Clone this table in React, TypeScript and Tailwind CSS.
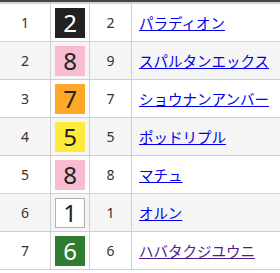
const rows = [
  { order: 1, frame: 2, horse: 2, name: "パラディオン", visited: false },
  { order: 2, frame: 8, horse: 9, name: "スパルタンエックス", visited: false },
  { order: 3, frame: 7, horse: 7, name: "ショウナンアンバー", visited: false },
  { order: 4, frame: 5, horse: 5, name: "ポッドリプル", visited: false },
  { order: 5, frame: 8, horse: 8, name: "マチュ", visited: false },
  { order: 6, frame: 1, horse: 1, name: "オルン", visited: false },
  { order: 7, frame: 6, horse: 6, name: "ハバタクジユウニ", visited: true },
];

// 枠番の色
const frameStyle: Record<number, string> = {
  1: "bg-white text-[#222] border border-[#b0b0b0]",
  2: "bg-[#222222] text-white",
  3: "bg-[#e53935] text-white",
  4: "bg-[#1e88e5] text-white",
  5: "bg-[#ffeb3b] text-[#222]",
  6: "bg-[#2e7d32] text-white",
  7: "bg-[#ffa726] text-[#222]",
  8: "bg-[#f8bbd0] text-[#222]",
};

export default function App() {
  return (
    <div className="w-[280px] h-[273px] bg-white overflow-hidden font-['Noto_Sans','Noto_Sans_CJK_JP',sans-serif]">
      <div className="h-[2px] bg-[#3d4850]" />
      <div className="border-t-2 border-[#d4d4d4]">
        {rows.map((r, i) => (
          <div
            key={r.order}
            className={`flex h-[38px] border-b border-[#cfcfcf] ${i % 2 === 1 ? "bg-[#f5f5f5]" : "bg-white"}`}
          >
            <div className="w-[51px] shrink-0 border-r border-[#cfcfcf] flex items-center justify-center text-[14px] text-[#333]">
              {r.order}
            </div>
            <div className="w-[39px] shrink-0 border-r border-[#cfcfcf] flex items-center justify-center">
              <div
                className={`w-[30px] h-[30px] flex items-center justify-center text-[24px] leading-none ${frameStyle[r.frame]}`}
              >
                {r.frame}
              </div>
            </div>
            <div className="w-[42px] shrink-0 border-r border-[#cfcfcf] flex items-center justify-center text-[14px] text-[#333]">
              {r.horse}
            </div>
            <div className="flex-1 min-w-0 flex items-center pl-[7px] pt-[1px] whitespace-nowrap">
              <a
                href="#"
                className={`text-[14.5px] underline font-['Noto_Sans_CJK_JP',sans-serif] ${r.visited ? "text-[#551a8b]" : "text-[#0000ee]"}`}
              >
                {r.name}
              </a>
            </div>
          </div>
        ))}
      </div>
    </div>
  );
}
